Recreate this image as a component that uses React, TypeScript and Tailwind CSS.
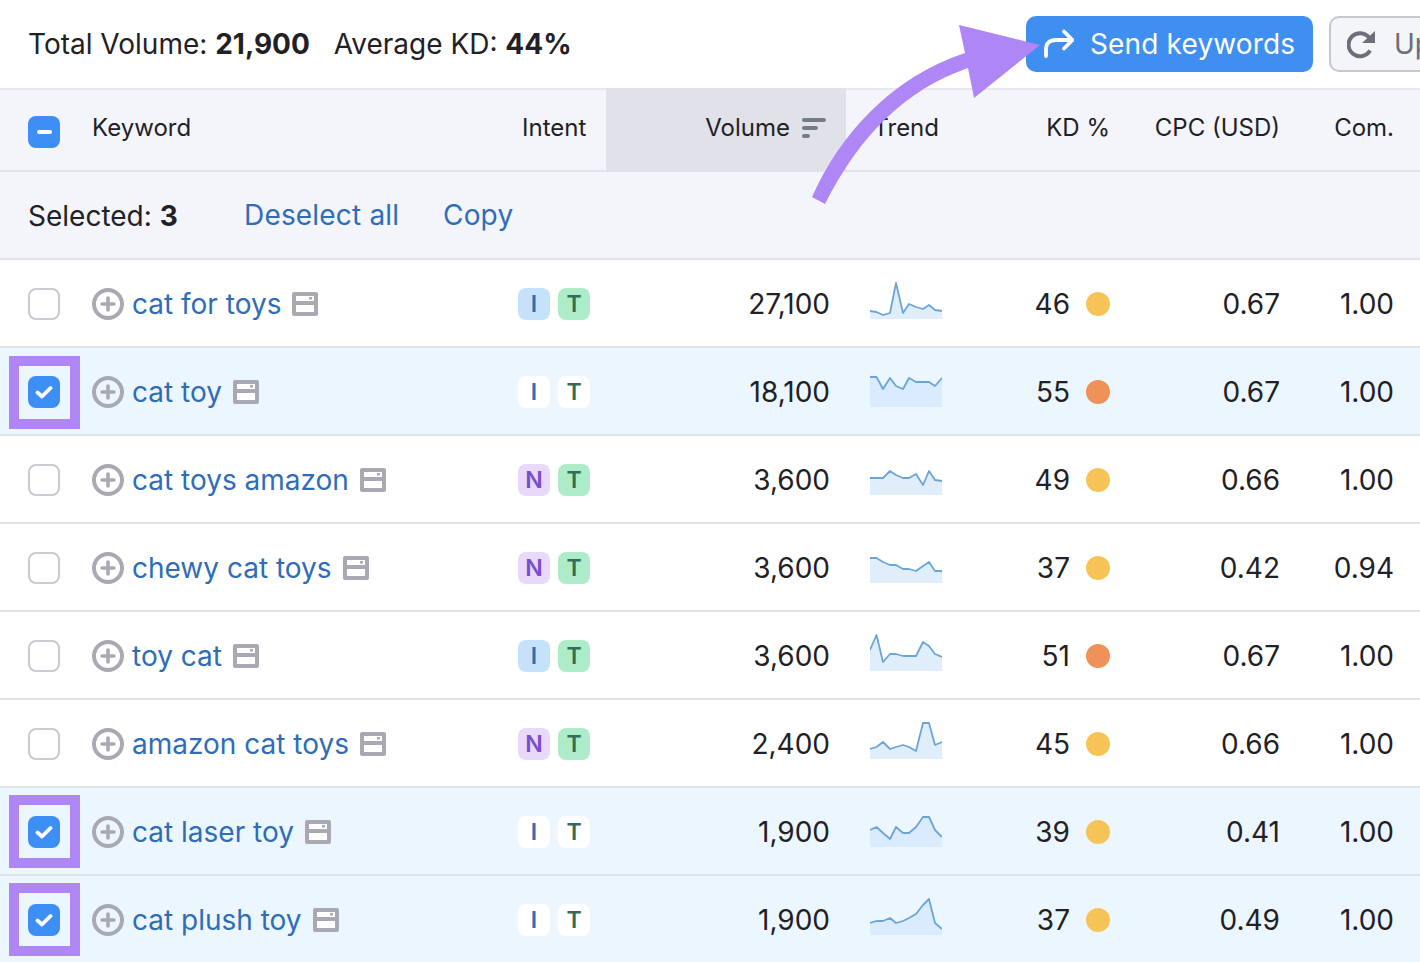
import React from "react";

type Row = {
  kw: string;
  a: "I" | "N";
  vol: string;
  kd: number;
  cpc: string;
  com: string;
  sel?: boolean;
  box?: string;
  ys: number[];
};

const XS = [0, 6.5, 13, 20, 26, 33, 39, 46, 53, 59, 65, 72];

const rows: Row[] = [
  { kw: "cat for toys", a: "I", vol: "27,100", kd: 46, cpc: "0.67", com: "1.00", ys: [32, 33, 36, 34, 4, 34, 25, 28, 30, 26, 31, 32] },
  { kw: "cat toy", a: "I", vol: "18,100", kd: 55, cpc: "0.67", com: "1.00", sel: true, box: "top-[8px]", ys: [10, 10, 22, 11, 19, 22, 11, 15, 15, 15, 19, 11] },
  { kw: "cat toys amazon", a: "N", vol: "3,600", kd: 49, cpc: "0.66", com: "1.00", ys: [23, 23, 23, 16, 20, 23, 23, 19, 30, 16, 25, 26] },
  { kw: "chewy cat toys", a: "N", vol: "3,600", kd: 37, cpc: "0.42", com: "0.94", ys: [15, 15, 19, 22, 22, 26, 26, 28, 23, 19, 28, 28] },
  { kw: "toy cat", a: "I", vol: "3,600", kd: 51, cpc: "0.67", com: "1.00", ys: [19, 4, 31, 23, 23, 25, 25, 25, 11, 15, 23, 26] },
  { kw: "amazon cat toys", a: "N", vol: "2,400", kd: 45, cpc: "0.66", com: "1.00", ys: [30, 28, 23, 30, 28, 26, 28, 32, 4, 4, 26, 23] },
  { kw: "cat laser toy", a: "I", vol: "1,900", kd: 39, cpc: "0.41", com: "1.00", sel: true, box: "top-[7px]", ys: [23, 20, 26, 32, 20, 26, 26, 20, 10, 10, 23, 30] },
  { kw: "cat plush toy", a: "I", vol: "1,900", kd: 37, cpc: "0.49", com: "1.00", sel: true, box: "top-[7px]", ys: [28, 26, 26, 23, 28, 26, 23, 19, 10, 4, 28, 34] },
];

function Spark({ ys }: { ys: number[] }) {
  const line = ys.map((y, i) => `${XS[i]},${y}`).join(" ");
  return (
    <svg width="72" height="50" viewBox="0 0 72 50" className="block">
      <polygon points={`0,40 ${line} 72,40`} fill="#cfe5fa" fillOpacity="0.65" />
      <polyline points={line} fill="none" stroke="#6ba5d8" strokeWidth="1.8" strokeLinejoin="round" />
    </svg>
  );
}

function PlusCircle() {
  return (
    <svg width="32" height="32" viewBox="0 0 32 32" className="shrink-0">
      <circle cx="16" cy="16" r="14" fill="none" stroke="#a8a9b3" strokeWidth="4" />
      <path d="M16 10v12M10 16h12" stroke="#a8a9b3" strokeWidth="3.6" strokeLinecap="round" />
    </svg>
  );
}

function SerpIcon() {
  return (
    <svg width="26" height="24" viewBox="0 0 26 24" className="shrink-0">
      <rect x="0" y="0" width="26" height="24" rx="2" fill="#a8a9b3" />
      <rect x="4" y="4" width="18" height="5" fill="#fff" />
      <rect x="17" y="5" width="3" height="2.500" fill="#a8a9b3" />
      <rect x="4" y="13" width="18" height="7" fill="#fff" />
    </svg>
  );
}

function Check() {
  return (
    <span className="flex h-8 w-8 items-center justify-center rounded-lg bg-[#3d8ff5]">
      <svg width="18" height="14" viewBox="0 0 18 14">
        <path d="M2.500 7.500l4.500 4 8.500-8.500" fill="none" stroke="#fff" strokeWidth="3.8" strokeLinecap="round" strokeLinejoin="round" />
      </svg>
    </span>
  );
}

function Badge({ t, sel }: { t: "I" | "N" | "T"; sel?: boolean }) {
  const color =
    t === "I"
      ? sel
        ? "bg-white text-[#2f6db8]"
        : "bg-[#c6e2fb] text-[#2f6db8]"
      : t === "N"
        ? "bg-[#e8d9fb] text-[#7a4cd0]"
        : sel
          ? "bg-white text-[#2f6f58]"
          : "bg-[#aeecc9] text-[#2f6f58]";
  return (
    <span className={`flex h-8 w-8 items-center justify-center rounded-lg text-[23px] font-semibold leading-none ${color}`}>
      {t}
    </span>
  );
}

export default function App() {
  return (
    <div className="relative h-[962px] w-[1420px] overflow-hidden bg-white font-[Inter,sans-serif] text-[28px] leading-none text-[#1f2127]">
      <div className="flex h-[88px] items-center justify-between pl-[28px]">
        <div className="flex gap-[24px]">
          <span>
            Total Volume: <b className="font-bold">21,900</b>
          </span>
          <span>
            Average KD: <b className="font-bold">44%</b>
          </span>
        </div>
        <div className="flex w-[394px] shrink-0 gap-[16px]">
          <button className="flex h-14 w-[287px] shrink-0 items-center gap-[16px] rounded-[10px] bg-[#3f8ff0] pl-[18px] tracking-[0.15px] text-white">
            <svg width="30" height="30" viewBox="0 0 30 30" className="shrink-0">
              <path
                d="M2 27V20C2 14 6 11 12 11H28M20 2.500L28.500 11L20 19.500"
                fill="none"
                stroke="#fff"
                strokeWidth="3.8"
                strokeLinecap="round"
                strokeLinejoin="round"
              />
            </svg>
            <span>Send keywords</span>
          </button>
          <button className="flex h-14 w-[140px] shrink-0 items-center gap-[19px] rounded-[10px] border-2 border-[#c6c8d0] bg-[#f4f5f9] pl-[16px] text-[#6c6e79]">
            <svg width="28" height="30" viewBox="0 0 28 30" className="shrink-0">
              <path d="M22 8.500A11.500 11.500 0 1 0 23 21.500" fill="none" stroke="#6c6e79" strokeWidth="4" />
              <path d="M15 14H28V2z" fill="#6c6e79" />
            </svg>
            <span>Update</span>
          </button>
        </div>
      </div>

      <div className="flex h-[84px] items-stretch border-b-2 border-[#e0e3ea] bg-[#f4f5fa] text-[24px] shadow-[inset_0_2px_0_#e6e8ef]">
        <div className="flex w-[92px] items-center pl-[28px] pt-[6px]">
          <span className="flex h-8 w-8 items-center justify-center rounded-lg bg-[#3d8ff5]">
            <span className="h-[4px] w-[15px] rounded-full bg-white" />
          </span>
        </div>
        <div className="flex w-[426px] items-center pb-[2px]">Keyword</div>
        <div className="flex w-[88px] items-center pb-[2px] pl-[4px]">Intent</div>
        <div className="-mb-[2px] flex w-[240px] items-center justify-end gap-[12px] bg-[#e0e1e9] pb-[4px] pr-[20px]">
          Volume
          <svg width="24" height="20" viewBox="0 0 24 20">
            <path d="M2 2h20M2 10h12M2 18h4" stroke="#757c83" strokeWidth="4" strokeLinecap="round" />
          </svg>
        </div>
        <div className="flex w-[93px] items-center justify-end pb-[2px]">Trend</div>
        <div className="flex w-[171px] items-center justify-end pb-[2px]">KD %</div>
        <div className="flex w-[170px] items-center justify-end pb-[2px]">CPC (USD)</div>
        <div className="flex w-[114px] items-center justify-end pb-[2px]">Com.</div>
      </div>

      <div className="flex h-[88px] items-center border-b-2 border-[#e0e3ea] bg-[#f4f5fa] pl-[28px]">
        <span className="w-[216px] pt-[2px]">
          Selected: <b className="font-bold">3</b>
        </span>
        <span className="w-[199px] tracking-[0.18px] text-[#2f6db8]">Deselect all</span>
        <span className="tracking-[0.18px] text-[#2f6db8]">Copy</span>
      </div>

      {rows.map((r) => (
        <div
          key={r.kw}
          className={`relative flex h-[88px] items-center border-b-2 border-[#e0e3ea] pt-[2px] ${r.sel ? "bg-[#ecf6fe]" : "bg-white"}`}
        >
          <div className="flex w-[92px] items-center pl-[28px]">
            {r.sel ? <Check /> : <span className="h-8 w-8 rounded-lg border-2 border-[#c9cbd3] bg-white" />}
          </div>
          <div className="flex w-[426px] items-center gap-[8px] text-[#2f6db8]">
            <PlusCircle />
            <span className="mr-[3px]">{r.kw}</span>
            <SerpIcon />
          </div>
          <div className="flex w-[88px] gap-[8px]">
            <Badge t={r.a} sel={r.sel} />
            <Badge t="T" sel={r.sel} />
          </div>
          <div className="w-[224px] text-right">{r.vol}</div>
          <div className="ml-[40px] w-[72px]">
            <Spark ys={r.ys} />
          </div>
          <div className="w-[128px] text-right">{r.kd}</div>
          <span className={`ml-[16px] h-6 w-6 rounded-full ${r.kd >= 50 ? "bg-[#f0915a]" : "bg-[#f5c356]"}`} />
          <div className="w-[170px] text-right">{r.cpc}</div>
          <div className="w-[114px] text-right">{r.com}</div>
          {r.sel && (
            <span className={`absolute left-[9px] h-[73px] w-[71px] border-[10px] border-[#ae86f5] ${r.box}`} />
          )}
        </div>
      ))}

      <svg width="1420" height="962" viewBox="0 0 1420 962" className="pointer-events-none absolute left-0 top-0">
        <path
          d="M812 197C840 135 890 78 965 53L959 25L1040 45L974 98L968 68C905 90 860 135 825 204Z"
          fill="#ae86f5"
        />
      </svg>
    </div>
  );
}
